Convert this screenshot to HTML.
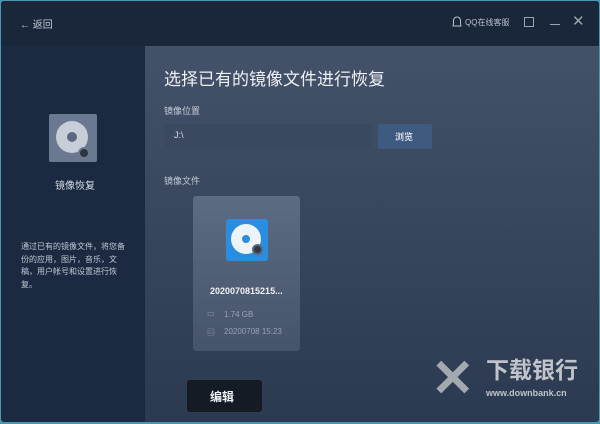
<!DOCTYPE html>
<html><head><meta charset="utf-8"><style>
*{margin:0;padding:0;box-sizing:border-box}
body{width:600px;height:424px;overflow:hidden;background:#4a98ae;font-family:"Liberation Sans","Noto Sans CJK SC",sans-serif;position:relative}
.win{position:absolute;left:1px;top:1px;width:598px;height:421px;background:#1b2a41;border-radius:3px;overflow:hidden}
.top{position:absolute;left:0;top:0;width:598px;height:45px;background:#1a2639}
.right{position:absolute;left:144px;top:45px;width:454px;height:376px;background:linear-gradient(#435169,#2b3a51)}
.t{position:absolute;color:#d6dce6;white-space:nowrap}
</style></head><body>
<div class="win">
<div class="top">
 <div class="t" style="left:19px;top:15px;font-size:10px;color:#c4ccd8">← 返回</div>
 <svg style="position:absolute;left:451px;top:15px" width="10" height="12"><path d="M5 1a3.5 3.5 0 0 0-3.5 3.5v3L1 10h8L8.5 7.5v-3A3.5 3.5 0 0 0 5 1z" fill="none" stroke="#b8c0cc" stroke-width="1"/></svg>
 <div class="t" style="left:464px;top:16px;font-size:8px;color:#b8c0cc">QQ在线客服</div>
 <div style="position:absolute;left:523px;top:16px;width:10px;height:10px;border:1px solid #9aa4b2"></div>
 <div style="position:absolute;left:549px;top:23px;width:10px;height:1px;background:#9aa4b2"></div>
 <div class="t" style="left:571px;top:11px;font-size:15px;color:#9aa4b2">✕</div>
</div>
<div style="position:absolute;left:48px;top:113px;width:48px;height:48px;background:#6a7890;border-radius:2px"></div>
<div style="position:absolute;left:55px;top:120px;width:32px;height:32px;border-radius:50%;background:#c8ced8"></div>
<div style="position:absolute;left:66px;top:131px;width:10px;height:10px;border-radius:50%;background:#5a6880"></div>
<div style="position:absolute;left:77px;top:146px;width:12px;height:12px;border-radius:50%;background:#2a3444;border:2px solid #6a7890"></div>
<div class="t" style="left:54px;top:176px;font-size:10px">镜像恢复</div>
<div class="t" style="left:20px;top:240px;font-size:8px;line-height:12.5px;white-space:normal;width:105px;color:#c0c8d4">通过已有的镜像文件，将您备份的应用，图片，音乐，文稿，用户帐号和设置进行恢复。</div>
<div class="right">
 <div class="t" style="left:19px;top:19px;font-size:17px;color:#eef1f5">选择已有的镜像文件进行恢复</div>
 <div class="t" style="left:19px;top:58px;font-size:9px;color:#c4ccd8">镜像位置</div>
 <div style="position:absolute;left:19px;top:78px;width:208px;height:25px;background:#3a4860;border-radius:2px"></div>
 <div class="t" style="left:29px;top:84px;font-size:9px">J:\</div>
 <div style="position:absolute;left:233px;top:78px;width:54px;height:25px;background:#3e5a7e;border-radius:2px"></div>
 <div class="t" style="left:250px;top:84px;font-size:9px;font-weight:bold">浏览</div>
 <div class="t" style="left:19px;top:128px;font-size:9px;color:#c4ccd8">镜像文件</div>
 <div style="position:absolute;left:48px;top:150px;width:107px;height:155px;background:linear-gradient(#5d6b83,#45536b);border-radius:3px"></div>
 <div style="position:absolute;left:81px;top:173px;width:42px;height:42px;background:#2a8ee0;border-radius:3px"></div>
 <div style="position:absolute;left:86px;top:178px;width:30px;height:30px;border-radius:50%;background:#eef3f8"></div>
 <div style="position:absolute;left:97px;top:189px;width:8px;height:8px;border-radius:50%;background:#2a8ee0"></div>
 <div style="position:absolute;left:107px;top:198px;width:11px;height:11px;border-radius:50%;background:#2e3848;border:2px solid #5a6676"></div>
 <div class="t" style="left:65px;top:240px;font-size:9px;font-weight:bold;color:#f0f2f5">2020070815215...</div>
 <div class="t" style="left:62px;top:263px;font-size:8px;color:#97a2b3">▭</div>
 <div class="t" style="left:79px;top:264px;font-size:8px;color:#97a2b3">1.74 GB</div>
 <div class="t" style="left:62px;top:281px;font-size:8px;color:#97a2b3">▤</div>
 <div class="t" style="left:79px;top:281px;font-size:8px;color:#97a2b3">20200708 15:23</div>
 <div style="position:absolute;left:42px;top:334px;width:75px;height:32px;background:#141b25;border-radius:3px"></div>
 <div class="t" style="left:65px;top:342px;font-size:12px;font-weight:bold;color:#eef1f5">编辑</div>
 <div class="t" style="left:286px;top:303px;font-size:52px;font-weight:bold;color:#b8bcc2;opacity:.85">✕</div>
 <div class="t" style="left:341px;top:305px;font-size:23px;font-weight:bold;color:#c0c4ca">下载银行</div>
 <div class="t" style="left:341px;top:342px;font-size:9px;font-weight:bold;color:#c0c4ca">www.downbank.cn</div>
</div>
</div>
</body></html>
